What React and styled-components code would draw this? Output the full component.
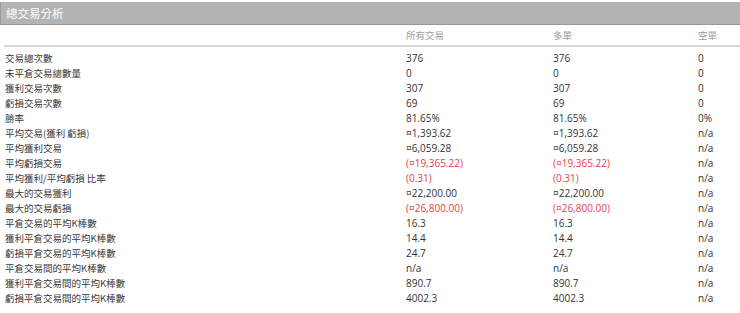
import React from 'react'
import styled, { createGlobalStyle } from 'styled-components'

const GlobalStyle = createGlobalStyle`
  body {
    margin: 0;
    background: #ffffff;
    font-family: "Open Sans", "Noto Sans CJK TC", sans-serif;
  }
`

const rows = [
  ['交易總次數', '376', '376', '0'],
  ['未平倉交易總數量', '0', '0', '0'],
  ['獲利交易次數', '307', '307', '0'],
  ['虧損交易次數', '69', '69', '0'],
  ['勝率', '81.65%', '81.65%', '0%'],
  ['平均交易(獲利 虧損)', '¤1,393.62', '¤1,393.62', 'n/a'],
  ['平均獲利交易', '¤6,059.28', '¤6,059.28', 'n/a'],
  ['平均虧損交易', '(¤19,365.22)', '(¤19,365.22)', 'n/a', true],
  ['平均獲利/平均虧損 比率', '(0.31)', '(0.31)', 'n/a', true],
  ['最大的交易獲利', '¤22,200.00', '¤22,200.00', 'n/a'],
  ['最大的交易虧損', '(¤26,800.00)', '(¤26,800.00)', 'n/a', true],
  ['平倉交易的平均K棒數', '16.3', '16.3', 'n/a'],
  ['獲利平倉交易的平均K棒數', '14.4', '14.4', 'n/a'],
  ['虧損平倉交易的平均K棒數', '24.7', '24.7', 'n/a'],
  ['平倉交易間的平均K棒數', 'n/a', 'n/a', 'n/a'],
  ['獲利平倉交易間的平均K棒數', '890.7', '890.7', 'n/a'],
  ['虧損平倉交易間的平均K棒數', '4002.3', '4002.3', 'n/a'],
]

const Page = styled.div`
  padding-top: 2px;
`

const TitleBar = styled.div`
  height: 22px;
  display: flex;
  align-items: center;
  padding-left: 5px;
  background: #b4b4b4;
  border-left: 1px solid #9c9c9c;
  border-bottom: 1px solid #979797;
  color: #ffffff;
  font-family: "Noto Sans CJK TC", sans-serif;
  font-size: 11.5px;
`

const Table = styled.div`
  padding-left: 4px;
`

const Grid = styled.div`
  display: grid;
  grid-template-columns: 401px 147px 145px 1fr;
  align-items: center;
`

const HeadRow = styled(Grid)`
  height: 20px;
  border-bottom: 2px solid #d6d6d6;
  margin-bottom: 3px;
`

const HeadCell = styled.div`
  padding-left: 1px;
  color: #a0a0a0;
  font-family: "Noto Sans CJK TC", sans-serif;
  font-size: 9.5px;
`

const Row = styled(Grid)`
  height: 15px;
`

const Label = styled.div`
  padding-left: 1px;
  color: #3a3a3a;
  font-family: "Noto Sans CJK TC", sans-serif;
  font-size: 9.5px;
  white-space: nowrap;
`

const Value = styled.div`
  padding-left: 1px;
  color: ${(p) => (p.$negative ? '#e2434f' : '#333333')};
  font-family: "Open Sans", sans-serif;
  font-size: 10px;
  white-space: nowrap;
`

export default function App() {
  return (
    <Page>
      <GlobalStyle />
      <TitleBar>總交易分析</TitleBar>
      <Table>
        <HeadRow>
          <HeadCell />
          <HeadCell>所有交易</HeadCell>
          <HeadCell>多單</HeadCell>
          <HeadCell>空單</HeadCell>
        </HeadRow>
        {rows.map(([label, all, long, short, negative]) => (
          <Row key={label}>
            <Label>{label}</Label>
            <Value $negative={negative}>{all}</Value>
            <Value $negative={negative}>{long}</Value>
            <Value>{short}</Value>
          </Row>
        ))}
      </Table>
    </Page>
  )
}
